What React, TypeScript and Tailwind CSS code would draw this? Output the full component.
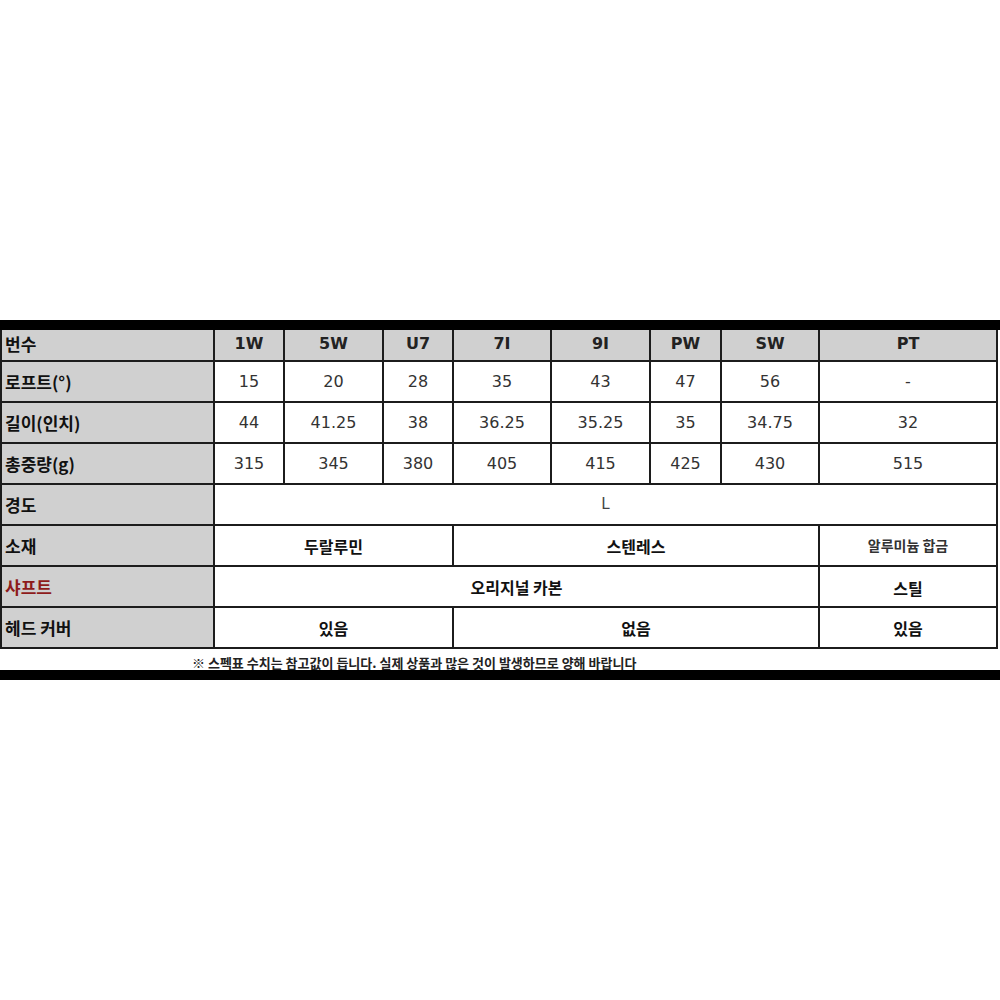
// 골프 클럽 스펙표

const heads = ['1W', '5W', 'U7', '7I', '9I', 'PW', 'SW', 'PT'];

const numRows: { label: string; values: string[] }[] = [
  { label: '로프트(°)', values: ['15', '20', '28', '35', '43', '47', '56', '-'] },
  { label: '길이(인치)', values: ['44', '41.25', '38', '36.25', '35.25', '35', '34.75', '32'] },
  { label: '총중량(g)', values: ['315', '345', '380', '405', '415', '425', '430', '515'] },
];

const KR = "font-['Noto_Sans_CJK_KR','Noto_Sans',sans-serif]";
const NUM = "font-['DejaVu_Sans',Verdana,sans-serif]";

function Label({ children, red }: { children: React.ReactNode; red?: boolean }) {
  return (
    <div
      className={`flex items-center bg-[#d0d0d0] pl-[3px] text-[17px] font-bold font-['Noto_Sans_CJK_KR','Noto_Sans',sans-serif] ${red ? 'text-[#8e1b1b]' : 'text-[#111]'}`}
    >
      {children}
    </div>
  );
}

function Cell({ children, className = '' }: { children: React.ReactNode; className?: string }) {
  return (
    <div className={`flex items-center justify-center bg-white ${className}`}>{children}</div>
  );
}

export default function App() {
  return (
    <div className="min-h-[1000px] w-[1000px] bg-white pt-[320px]">
      <div className="h-[10px] w-full bg-black" />

      <div className="grid w-[998px] gap-[2px] bg-[#1c1c1c] px-[2px] pb-[2px] grid-cols-[211px_68px_97px_68px_96px_97px_69px_96px_176px] grid-rows-[30px_repeat(7,39px)]">
        {/* 헤더 */}
        <div className={`flex items-start bg-[#d0d0d0] pl-[3px] pt-[1px] text-[17px] font-bold text-[#111] ${KR}`}>
          번수
        </div>
        {heads.map((h) => (
          <div
            key={h}
            className={`flex items-start justify-center bg-[#d0d0d0] pt-[2px] text-[16px] font-bold text-[#222] ${NUM}`}
          >
            {h}
          </div>
        ))}

        {/* 숫자 행 */}
        {numRows.map((r) => (
          <div key={r.label} className="contents">
            <Label>{r.label}</Label>
            {r.values.map((v, i) => (
              <Cell key={i} className={`text-[16px] text-[#333] ${NUM}`}>
                {v}
              </Cell>
            ))}
          </div>
        ))}

        {/* 경도 */}
        <Label>경도</Label>
        <Cell className={`col-span-8 text-[15px] text-[#444] ${NUM}`}>L</Cell>

        {/* 소재 */}
        <Label>소재</Label>
        <Cell className={`col-span-3 text-[16px] font-bold text-[#111] ${KR}`}>두랄루민</Cell>
        <Cell className={`col-span-4 text-[16px] font-bold text-[#111] ${KR}`}>스텐레스</Cell>
        <Cell className={`text-[14px] font-bold text-[#333] ${KR}`}>알루미늄 합금</Cell>

        {/* 샤프트 */}
        <Label red>샤프트</Label>
        <Cell className={`col-span-7 text-[16px] font-bold text-[#111] ${KR}`}>오리지널 카본</Cell>
        <Cell className={`pt-[3px] text-[16px] font-bold text-[#111] ${KR}`}>스틸</Cell>

        {/* 헤드 커버 */}
        <Label>헤드 커버</Label>
        <Cell className={`col-span-3 text-[16px] font-bold text-[#111] ${KR}`}>있음</Cell>
        <Cell className={`col-span-4 text-[16px] font-bold text-[#111] ${KR}`}>없음</Cell>
        <Cell className={`text-[16px] font-bold text-[#111] ${KR}`}>있음</Cell>
      </div>

      <div className="flex h-[21px] items-end pl-[192px]">
        <p className={`text-[13px] font-bold leading-[15px] text-[#222] ${KR}`}>
          ※ 스펙표 수치는 참고값이 듭니다. 실제 상품과 많은 것이 발생하므로 양해 바랍니다
        </p>
      </div>
      <div className="h-[10px] w-full bg-black" />
    </div>
  );
}
